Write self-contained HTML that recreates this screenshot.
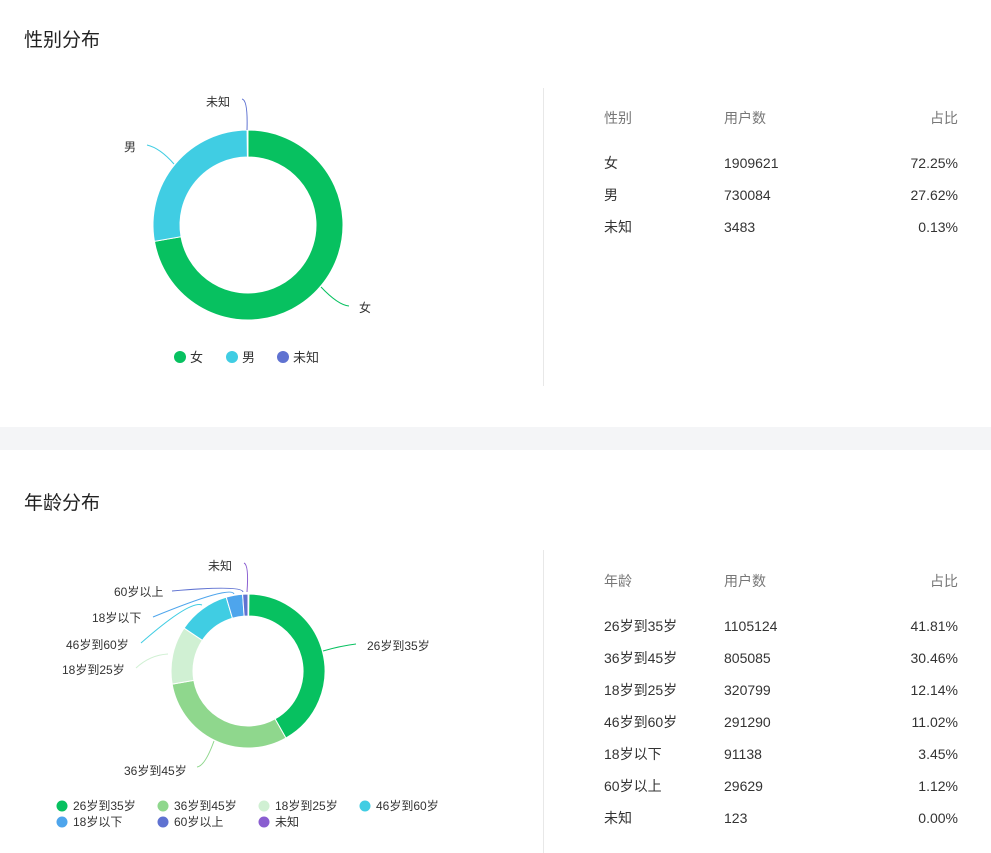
<!DOCTYPE html>
<html><head><meta charset="utf-8"><style>
body{margin:0;width:991px;height:853px;background:#fff;font-family:"Liberation Sans","Noto Sans CJK SC",sans-serif;position:relative;overflow:hidden;color:#333}
.t{position:absolute;left:24px;font-size:19px;color:#222}
.d{position:absolute;left:543px;width:1px;background:#e8e8e8}
.band{position:absolute;left:0;top:427px;width:991px;height:23px;background:#f4f5f7}
.r{position:absolute;font-size:14px;color:#333;white-space:nowrap}
.n{margin-top:2px}
.h{color:#777}
svg{position:absolute;left:0;top:0}
svg text{font-family:"Liberation Sans","Noto Sans CJK SC",sans-serif;font-size:12px;fill:#333}
</style></head><body>
<div class="t" style="top:25px">性别分布</div>
<div class="d" style="top:88px;height:298px"></div>
<div class="band"></div>
<div class="t" style="top:488px">年龄分布</div>
<div class="d" style="top:550px;height:303px"></div>
<div id="tb"></div>
<svg id="s" width="991" height="853"></svg>
<script>
var tb=document.getElementById('tb'),h='';
function rows(y0,hd,data){
 h+='<div class="r h" style="left:604px;top:'+(y0-9)+'px">'+hd+'</div><div class="r h" style="left:724px;top:'+(y0-9)+'px">用户数</div><div class="r h" style="right:33px;top:'+(y0-9)+'px">占比</div>';
 data.forEach(function(d,i){var y=y0+45+32*i-9;
 h+='<div class="r" style="left:604px;top:'+y+'px">'+d[0]+'</div><div class="r n" style="left:724px;top:'+y+'px">'+d[1]+'</div><div class="r n" style="right:33px;top:'+y+'px">'+d[2]+'</div>';});
}
rows(117,'性别',[['女','1909621','72.25%'],['男','730084','27.62%'],['未知','3483','0.13%']]);
rows(580,'年龄',[['26岁到35岁','1105124','41.81%'],['36岁到45岁','805085','30.46%'],['18岁到25岁','320799','12.14%'],['46岁到60岁','291290','11.02%'],['18岁以下','91138','3.45%'],['60岁以上','29629','1.12%'],['未知','123','0.00%']]);
tb.innerHTML=h;
var s='';
function P(cx,cy,r,a){a=(a-90)*Math.PI/180;return [cx+r*Math.cos(a),cy+r*Math.sin(a)];}
function donut(cx,cy,R,ri,vals,cols){var a=0;vals.forEach(function(v,i){var b=a+v*360;if(b-a<0.4)b=a+0.4;var l=(b-a)>180?1:0;
var p1=P(cx,cy,R,a),p2=P(cx,cy,R,b),p3=P(cx,cy,ri,b),p4=P(cx,cy,ri,a);
s+='<path d="M'+p1+' A'+R+' '+R+' 0 '+l+' 1 '+p2+' L'+p3+' A'+ri+' '+ri+' 0 '+l+' 0 '+p4+'Z" fill="'+cols[i]+'" stroke="#fff" stroke-width="1"/>';a=b;});}
donut(248,225,95,68,[.7225,.2762,.0013],['#07c160','#40cde3','#5f72d1']);
donut(248,671,77,55,[.4181,.3046,.1214,.1102,.0345,.0112,.002],['#07c160','#8fd78d','#d0f0d3','#40cde3','#4ea5ec','#5f72d1','#8a5ed0']);
function ln(d,c){s+='<path d="'+d+'" fill="none" stroke="'+c+'" stroke-width="1"/>';}
ln('M321,287 Q338,305 349,306','#07c160');ln('M174,164 Q160,148 147,145','#40cde3');ln('M247,130 Q248,100 242,99','#5f72d1');
s+='<text x="359" y="312">女</text><text x="124" y="151">男</text><text x="206" y="106">未知</text>';
[['女','#07c160',180],['男','#40cde3',232],['未知','#5f72d1',283]].forEach(function(l){s+='<circle cx="'+l[2]+'" cy="357" r="6" fill="'+l[1]+'"/><text x="'+(l[2]+10)+'" y="362" style="font-size:13px">'+l[0]+'</text>';});
ln('M323,651 Q340,646 356,644','#07c160');ln('M214,741 Q205,766 197,767','#8fd78d');
ln('M168,654 Q150,655 136,668','#d0f0d3');ln('M202,605 Q190,600 141,643','#40cde3');
ln('M234,594 Q231,585 153,617','#4ea5ec');ln('M243,592 Q242,585 172,591','#5f72d1');ln('M247,592 Q249,565 244,563','#8a5ed0');
s+='<text x="367" y="650">26岁到35岁</text><text x="124" y="775">36岁到45岁</text><text x="62" y="674">18岁到25岁</text><text x="66" y="649">46岁到60岁</text><text x="92" y="622">18岁以下</text><text x="114" y="596">60岁以上</text><text x="208" y="570">未知</text>';
[['26岁到35岁','#07c160',62,806],['36岁到45岁','#8fd78d',163,806],['18岁到25岁','#d0f0d3',264,806],['46岁到60岁','#40cde3',365,806],['18岁以下','#4ea5ec',62,822],['60岁以上','#5f72d1',163,822],['未知','#8a5ed0',264,822]].forEach(function(l){s+='<circle cx="'+l[2]+'" cy="'+l[3]+'" r="5.5" fill="'+l[1]+'"/><text x="'+(l[2]+11)+'" y="'+(l[3]+4)+'">'+l[0]+'</text>';});
document.getElementById('s').innerHTML=s;
</script>
</body></html>
